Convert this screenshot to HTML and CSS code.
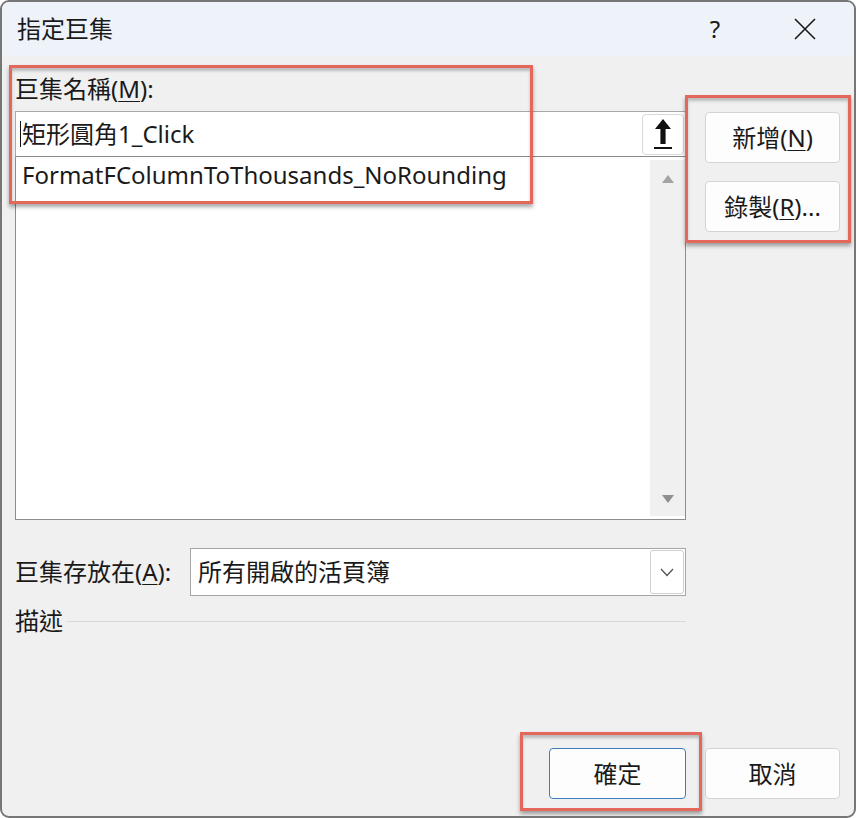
FILE: index.html
```html
<!DOCTYPE html>
<html lang="zh-Hant">
<head>
<meta charset="utf-8">
<title>指定巨集</title>
<link rel="stylesheet" href="styles.css">
</head>
<body>
<div class="dialog">
  <div class="titlebar">
    <span class="title">指定巨集</span>
    <span class="help">?</span>
    <span class="close">
      <svg width="24" height="24" viewBox="0 0 24 24"><path d="M2 2 L22 22 M22 2 L2 22" stroke="#1a1a1a" stroke-width="1.6" fill="none"/></svg>
    </span>
  </div>
  <div class="body">
    <div class="top-row">
      <div class="left-col">
        <div class="label">巨集名稱(<u>M</u>):</div>
        <div class="name-input">
          <span class="caret"></span><span class="name-text">矩形圓角1_Click</span>
          <span class="up-btn">
            <svg width="22" height="34" viewBox="0 0 22 34"><path d="M11 2 L19 12 L13.6 12 L13.6 27 L8.4 27 L8.4 12 L3 12 Z" fill="#111"/><rect x="2" y="30" width="18" height="2" fill="#111"/></svg>
          </span>
        </div>
        <div class="listbox">
          <div class="list-items">
            <div class="list-item">FormatFColumnToThousands_NoRounding</div>
          </div>
          <div class="scrollbar">
            <svg width="12" height="8" viewBox="0 0 12 8"><path d="M6 0 L12 8 L0 8 Z" fill="#a3a3a3"/></svg>
            <svg width="12" height="8" viewBox="0 0 12 8"><path d="M0 0 L12 0 L6 8 Z" fill="#8f8f8f"/></svg>
          </div>
        </div>
      </div>
      <div class="right-col">
        <button class="btn">新增(<u>N</u>)</button>
        <button class="btn">錄製(<u>R</u>)...</button>
      </div>
    </div>
    <div class="store-row">
      <span class="store-label">巨集存放在(<u>A</u>):</span>
      <div class="select">
        <span class="select-text">所有開啟的活頁簿</span>
        <span class="drop-btn">
          <svg width="14" height="9" viewBox="0 0 14 9"><path d="M1 1 L7 7.5 L13 1" stroke="#555" stroke-width="1.3" fill="none"/></svg>
        </span>
      </div>
    </div>
    <div class="desc-row">
      <span class="desc-label">描述</span>
      <span class="desc-line"></span>
    </div>
    <div class="footer">
      <button class="btn btn-ok">確定</button>
      <button class="btn btn-cancel">取消</button>
    </div>
  </div>
  <div class="mark mark-name"></div>
  <div class="mark mark-buttons"></div>
  <div class="mark mark-ok"></div>
</div>
</body>
</html>
```

FILE: styles.css
```css
* { box-sizing: border-box; }
html, body {
  margin: 0;
  padding: 0;
  background: #ffffff;
}
body {
  font-family: "Noto Sans", "Noto Sans CJK TC", sans-serif;
  font-size: 24px;
  color: #1a1a1a;
}
u { text-decoration-thickness: 1px; text-underline-offset: 3px; }

.dialog {
  position: relative;
  width: 856px;
  height: 818px;
  border: 2px solid #767676;
  border-radius: 9px;
  background: #f0f0f0;
  display: flex;
  flex-direction: column;
  overflow: hidden;
}

.titlebar {
  height: 54px;
  flex: none;
  background: #eef2f9;
  display: flex;
  align-items: center;
  padding-left: 15px;
}
.title { line-height: 30px; flex: 1; }
.help {
  width: 30px;
  text-align: center;
  margin-right: 63px;
  line-height: 30px;
}
.close {
  width: 24px;
  height: 24px;
  margin-right: 37px;
  display: flex;
}

.body {
  flex: 1;
  display: flex;
  flex-direction: column;
  padding: 0 14px 17px 13px;
}

.top-row { display: flex; gap: 19px; }
.left-col { width: 671px; display: flex; flex-direction: column; }
.label { margin-top: 18px; line-height: 30px; }

.name-input {
  margin-top: 7px;
  height: 46px;
  background: #fff;
  border: 1px solid #a8a8a8;
  border-bottom-color: #8a8a8a;
  display: flex;
  align-items: center;
  padding-left: 4px;
  padding-right: 1px;
}
.caret {
  width: 1px;
  height: 26px;
  background: #111;
  margin-right: 1px;
}
.name-text { flex: 1; line-height: 30px; }
.up-btn {
  width: 42px;
  height: 41px;
  background: #fff;
  border: 1px solid #d9d9d9;
  border-radius: 4px;
  display: flex;
  align-items: center;
  justify-content: center;
}

.listbox {
  height: 363px;
  background: #fff;
  border: 1px solid #8c8c8c;
  border-top: 0;
  display: flex;
  padding: 3px 0 3px 1px;
}
.list-items { flex: 1; }
.list-item { line-height: 30px; padding-left: 5px; }
.scrollbar {
  width: 35px;
  background: #f0f0f0;
  display: flex;
  flex-direction: column;
  justify-content: space-between;
  align-items: center;
  padding: 15px 0 13px;
}

.right-col {
  width: 135px;
  display: flex;
  flex-direction: column;
  gap: 18px;
  padding-top: 56px;
}
.btn {
  font: inherit;
  color: #1a1a1a;
  height: 51px;
  width: 135px;
  background: #fdfdfd;
  border: 1px solid #d4d4d4;
  border-radius: 4px;
  padding: 0;
  line-height: 30px;
}

.store-row {
  width: 671px;
  margin-top: 28px;
  display: flex;
  align-items: center;
}
.store-label { flex: 1; line-height: 30px; }
.select {
  width: 496px;
  height: 48px;
  background: #fff;
  border: 1px solid #a6a6a6;
  display: flex;
  align-items: center;
  padding: 1px 1px 1px 7px;
}
.select-text { flex: 1; line-height: 30px; }
.drop-btn {
  width: 34px;
  height: 44px;
  border: 1px solid #cfcfcf;
  border-radius: 3px;
  background: #fff;
  display: flex;
  align-items: center;
  justify-content: center;
}

.desc-row {
  width: 671px;
  margin-top: 10px;
  display: flex;
  align-items: center;
  gap: 4px;
}
.desc-label { line-height: 30px; }
.desc-line { flex: 1; height: 1px; background: #d9d9d9; }

.footer {
  margin-top: auto;
  display: flex;
  justify-content: flex-end;
  gap: 19px;
}
.btn-ok { width: 137px; border-color: #3d7cbf; }

.mark {
  position: absolute;
  border: 3px solid #e4675c;
  box-shadow: 0 3px 4px rgba(0,0,0,0.35), inset 0 3px 3px rgba(0,0,0,0.22);
  pointer-events: none;
}
.mark-name { left: 7px; top: 63px; width: 524px; height: 139px; }
.mark-buttons { left: 683px; top: 93px; width: 166px; height: 148px; }
.mark-ok { left: 518px; top: 730px; width: 182px; height: 79px; }
```
